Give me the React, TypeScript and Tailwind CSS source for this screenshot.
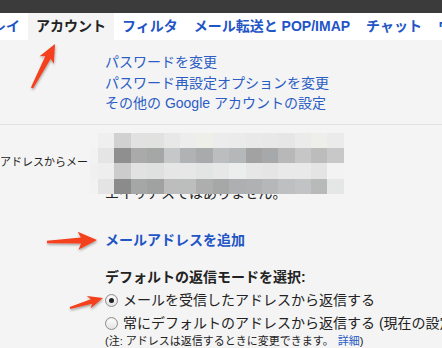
const tabs = [
  { label: "受信トレイ", active: false },
  { label: "アカウント", active: true },
  { label: "フィルタ", active: false },
  { label: "メール転送と POP/IMAP", active: false },
  { label: "チャット", active: false },
  { label: "ウェブクリップ", active: false },
];

const pixelRows = [
  { h: 15, c: ["#f4f4f4", "#efefef", "#d1d1d1", "#e1e1e1", "#e1e1df", "#e8e8e8", "#ededed", "#efefea", "#ececec", "#ebebeb", "#e9e9e9", "#e8e8e8", "#e6e6e6", "#ebebeb", "#eeeeea", "#ebebeb"] },
  { h: 15, c: ["#f2f2f2", "#e5e5e5", "#8e8f8e", "#aaaaaa", "#a5a6a6", "#c6c7c8", "#b1b2b3", "#a9aaac", "#bcbdbe", "#b5b8b9", "#a2a2a2", "#a7a8a9", "#b8b8b9", "#c6c6c7", "#bbbcbb", "#c8c8c8"] },
  { h: 16, c: ["#f0f0f0", "#eeeeee", "#cbcccb", "#e1e2e1", "#dfe0e0", "#e6e6e6", "#e7e7e8", "#e3e4e4", "#e7e7e7", "#eceded", "#e7e7e7", "#e5e5e5", "#e9e9e9", "#e9e9ea", "#e4e4e4", "#f3f3f3"] },
  { h: 15, c: ["#f2f2f2", "#e4e4e4", "#8a8b8a", "#a5a6a6", "#a0a1a1", "#bdbdbd", "#bcbdbd", "#aeaeae", "#a6a7a7", "#aeafb0", "#b0b1b3", "#b6b7b8", "#bebfc0", "#c2c3c4", "#b8b9b9", "#e5e6e6"] },
];

// tapered arrow: tail -> tip
function arrowPoints(tx: number, ty: number, hx: number, hy: number, headLen: number, headW: number, w0: number, w1: number) {
  const dx = hx - tx;
  const dy = hy - ty;
  const len = Math.hypot(dx, dy);
  const ux = dx / len;
  const uy = dy / len;
  const nx = -uy;
  const ny = ux;
  const bx = hx - ux * headLen;
  const by = hy - uy * headLen;
  const pts = [
    [tx + nx * w0, ty + ny * w0],
    [bx + nx * w1, by + ny * w1],
    [bx + nx * headW - ux * 3, by + ny * headW - uy * 3],
    [hx, hy],
    [bx - nx * headW - ux * 3, by - ny * headW - uy * 3],
    [bx - nx * w1, by - ny * w1],
    [tx - nx * w0, ty - ny * w0],
  ];
  return pts.map((p) => p[0].toFixed(1) + "," + p[1].toFixed(1)).join(" ");
}

function Radio({ checked }: { checked?: boolean }) {
  return (
    <span className="w-[13px] h-[13px] rounded-full border border-[#8c8c8c] bg-gradient-to-b from-[#ffffff] to-[#e2e2e2] flex items-center justify-center shrink-0 shadow-[inset_0_1px_1px_rgba(0,0,0,0.08)]">
      {checked && <span className="w-[5px] h-[5px] rounded-full bg-[#222]" />}
    </span>
  );
}

export default function App() {
  return (
    <main className="relative w-[442px] h-[348px] overflow-hidden bg-[#f4f4f4] text-[#222] font-['Liberation_Sans','Noto_Sans_CJK_JP',sans-serif]">
      <div className="h-[13px] bg-[#3b3b3b]" />

      {/* tabs */}
      <div className="h-[27px] bg-white">
        <div className="flex h-full ml-[-58px] whitespace-nowrap">
          {tabs.map((t) => (
            <div
              key={t.label}
              className={
                "h-full px-2 flex items-center shrink-0 text-[14px] font-bold " +
                (t.active ? "bg-[#f4f4f4] text-[#222]" : "text-[#1f55c6]")
              }
            >
              {t.label}
            </div>
          ))}
        </div>
      </div>

      <div className="pl-[105px] pt-[12px] pb-[10px] flex flex-col text-[14px] leading-[20.5px] text-[#2b5dc4] border-b border-[#e1e1e1]">
        <span>パスワードを変更</span>
        <span>パスワード再設定オプションを変更</span>
        <span>その他の Google アカウントの設定</span>
      </div>

      <div className="relative flex">
        <div className="w-[105px] shrink-0 pt-[30px] text-[11px] leading-[14px] whitespace-nowrap overflow-hidden">
          アドレスからメー
        </div>
        <div className="flex flex-col shrink-0 text-[14px] whitespace-nowrap">
          <div className="pt-[16px] leading-[20px] text-[#555]">
            <div>example.user@example.com</div>
            <div>名前 &lt;example.user@example.com&gt;</div>
          </div>
          <div className="mt-[2px] leading-[20px]">エイリアスではありません。</div>

          <div className="mt-[27px] leading-[20px] font-bold text-[#1f55c6]">メールアドレスを追加</div>

          <div className="mt-[17px] leading-[20px] font-bold">デフォルトの返信モードを選択:</div>

          <div className="mt-[2px] h-[23px] flex items-center gap-[5px]">
            <Radio checked />
            <span>メールを受信したアドレスから返信する</span>
          </div>
          <div className="h-[23px] flex items-center gap-[5px]">
            <Radio />
            <span>常にデフォルトのアドレスから返信する (現在の設定: example.user@example.com)</span>
          </div>
          <div className="h-[12px] flex items-center text-[11px] leading-[12px]">
            (注: アドレスは返信するときに変更できます。<span className="ml-[4px] text-[#2b5dc4]">詳細</span>)
          </div>
        </div>

        {/* pixelated redaction */}
        <div className="absolute left-[90px] top-[8px] flex flex-col">
          {pixelRows.map((r, i) => (
            <div key={i} className="flex" style={{ height: r.h }}>
              {r.c.map((c, j) => (
                <div key={j} className={j === 0 ? "w-[8px] h-full" : "w-[16.4px] h-full"} style={{ backgroundColor: c }} />
              ))}
            </div>
          ))}
        </div>
      </div>

      {/* annotation arrows */}
      <svg className="absolute left-0 top-0" width="442" height="348" viewBox="0 0 442 348">
        <defs>
          <filter id="sh" x="-20%" y="-20%" width="140%" height="140%">
            <feDropShadow dx="0.5" dy="1.5" stdDeviation="1.2" floodColor="#000" floodOpacity="0.35" />
          </filter>
        </defs>
        <g fill="#f43f1c" filter="url(#sh)">
          <polygon points={arrowPoints(32, 88, 55, 44, 15, 8, 1.2, 3)} />
          <polygon points={arrowPoints(47, 242, 97, 240, 16, 9, 1.2, 3)} />
          <polygon points={arrowPoints(70, 308, 103, 298, 12, 6.5, 1, 2.3)} />
        </g>
      </svg>
    </main>
  );
}
